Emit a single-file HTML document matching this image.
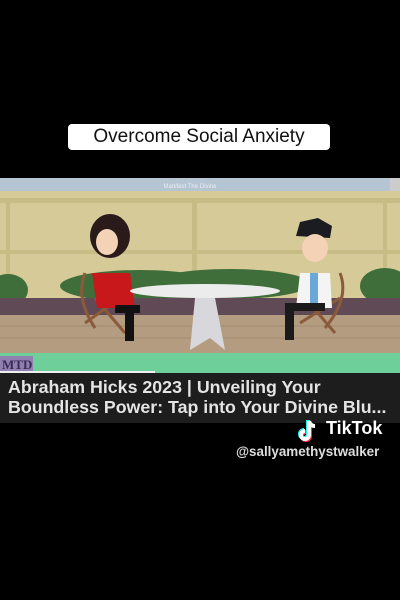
<!DOCTYPE html>
<html><head><meta charset="utf-8"><style>
body{margin:0;width:400px;height:600px;background:#000;overflow:hidden;position:relative;font-family:"Liberation Sans",sans-serif}
.lbl{position:absolute;left:68px;top:124px;width:262px;height:26px;background:#fff;border-radius:4px;color:#111;font-size:19px;text-align:center;line-height:26px}
.cap{position:absolute;left:0;top:373px;width:400px;height:50px;background:#1c1d1c;color:#e4e4e4;font-weight:bold;font-size:17.8px;line-height:20px;padding:4px 0 0 8px;box-sizing:border-box;white-space:nowrap}
.tt{position:absolute;left:326px;top:418px;color:#fff;font-weight:bold;font-size:18px}
.user{position:absolute;left:236px;top:444px;color:#ddd;font-weight:bold;font-size:13.4px}
</style></head><body>
<div class="lbl">Overcome Social Anxiety</div>
<svg style="position:absolute;left:0;top:178px" width="400" height="196">
<rect x="0" y="0" width="400" height="13" fill="#b6c5d3"/>
<rect x="390" y="0" width="10" height="13" fill="#ccc"/>
<text x="190" y="10" font-size="6" fill="#e8eef4" text-anchor="middle" font-family="Liberation Sans">Manifest The Divine</text>
<rect x="0" y="13" width="400" height="110" fill="#d6cb98"/>
<g fill="#c7bb86"><rect x="0" y="20" width="400" height="5"/><rect x="0" y="72" width="400" height="4"/>
<rect x="6" y="20" width="4" height="100"/><rect x="192" y="20" width="5" height="100"/><rect x="383" y="20" width="4" height="100"/></g>
<g fill="#3f6e3a"><ellipse cx="8" cy="112" rx="20" ry="16"/><ellipse cx="140" cy="108" rx="80" ry="16"/><ellipse cx="230" cy="106" rx="80" ry="15"/><ellipse cx="385" cy="108" rx="25" ry="18"/></g>
<rect x="0" y="120" width="400" height="17" fill="#5f4a55"/>
<rect x="0" y="137" width="400" height="38" fill="#b49c80"/>
<g stroke="#a08a70" stroke-width="1"><line x1="0" y1="148" x2="400" y2="148"/><line x1="0" y1="160" x2="400" y2="160"/></g>
<rect x="0" y="175" width="400" height="20" fill="#6fcf9a"/>
<rect x="0" y="178" width="33" height="15" fill="#8f80b0"/>
<text x="2" y="191" font-size="13" font-weight="bold" fill="#3a2a5a" font-family="Liberation Serif">MTD</text>
<rect x="0" y="193" width="155" height="2" fill="#eee"/>
<g stroke="#8a5a3a" stroke-width="3" fill="none"><path d="M85 95 Q75 120 95 150"/><path d="M85 145 L120 120"/><path d="M95 120 L125 155"/>
<path d="M340 95 Q350 120 325 150"/><path d="M300 145 L340 120"/><path d="M305 120 L335 155"/></g>
<ellipse cx="110" cy="58" rx="20" ry="22" fill="#2a1a1a"/>
<ellipse cx="107" cy="64" rx="11" ry="13" fill="#f3d2b5"/>
<path d="M92 95 L130 95 L135 130 L97 130 Z" fill="#c8181c"/>
<rect x="115" y="127" width="25" height="8" fill="#111"/><rect x="125" y="128" width="9" height="35" fill="#111"/>
<ellipse cx="205" cy="113" rx="75" ry="7" fill="#ececec"/>
<path d="M195 120 L215 120 L225 172 L210 160 L190 172 Z" fill="#d8d8dc"/>
<path d="M296 58 L300 44 L318 40 L332 48 L330 60 Z" fill="#1b1b22"/>
<ellipse cx="315" cy="70" rx="13" ry="14" fill="#f3d2b5"/>
<path d="M300 95 L330 95 L332 130 L296 130 Z" fill="#f4f4f4"/><rect x="310" y="95" width="8" height="32" fill="#6aa8d8"/>
<rect x="285" y="125" width="40" height="8" fill="#1a1a1a"/><rect x="285" y="126" width="9" height="36" fill="#1a1a1a"/>
</svg>
<div class="cap">Abraham Hicks 2023 | Unveiling Your<br>Boundless Power: Tap into Your Divine Blu...</div>
<svg style="position:absolute;left:297px;top:419px" width="22" height="24" viewBox="0 0 22 24">
<path d="M12 2 V16 a4 4 0 1 1 -4 -4" stroke="#25f4ee" stroke-width="4" fill="none" transform="translate(-1,-1)"/>
<path d="M12 2 V16 a4 4 0 1 1 -4 -4" stroke="#fe2c55" stroke-width="4" fill="none" transform="translate(1,1)"/>
<path d="M12 2 V16 a4 4 0 1 1 -4 -4 M12 2 q1 5 6 5" stroke="#fff" stroke-width="4" fill="none"/>
</svg>
<div class="tt">TikTok</div>
<div class="user">@sallyamethystwalker</div>
</body></html>
